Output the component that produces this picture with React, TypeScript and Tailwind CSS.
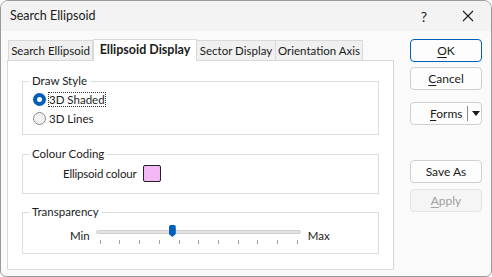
import React from "react";

const font = { fontFamily: 'Lato, "Noto Sans", sans-serif' };

function GroupBox({ label, className, children }: { label: string; className?: string; children?: React.ReactNode }) {
  return (
    <div className={"relative border border-[#dcdcdc] " + (className ?? "")}>
      <span className="absolute -top-[9px] left-[6px] bg-white px-[3px] text-[11.5px] leading-[16px] text-[#1b1b1b] whitespace-nowrap">
        {label}
      </span>
      {children}
    </div>
  );
}

function Radio({ checked, label, focused }: { checked?: boolean; label: string; focused?: boolean }) {
  return (
    <div className="flex items-center h-[19px]">
      {checked ? (
        <div className="w-[13px] h-[13px] rounded-full bg-[#005fb8] flex items-center justify-center">
          <div className="w-[5px] h-[5px] rounded-full bg-white" />
        </div>
      ) : (
        <div className="w-[13px] h-[13px] rounded-full border border-[#8a8a8a] bg-[#f3f3f3]" />
      )}
      <span
        className={
          "ml-[2px] px-[1px] text-[11.5px] leading-[15px] text-[#1b1b1b] whitespace-nowrap " +
          (focused ? "outline outline-1 outline-dotted outline-[#333] -outline-offset-1" : "")
        }
      >
        {label}
      </span>
    </div>
  );
}

function Btn({ children, primary, disabled, className }: { children: React.ReactNode; primary?: boolean; disabled?: boolean; className?: string }) {
  return (
    <div
      className={
        "h-[23px] w-[72px] rounded-[4px] flex items-center justify-center text-[12px] whitespace-nowrap " +
        (primary
          ? "border border-[#005fb8] bg-[#fdfdfd] text-[#1b1b1b] "
          : disabled
          ? "border border-[#e5e5e5] bg-[#f5f5f5] text-[#a0a0a0] "
          : "border border-[#d0d0d0] bg-[#fdfdfd] text-[#1b1b1b] ") +
        (className ?? "")
      }
    >
      {children}
    </div>
  );
}

export default function App() {
  const ticks = Array.from({ length: 11 }, (_, i) => i);
  return (
    <div style={font} className="w-[492px] h-[277px] overflow-hidden bg-white">
      <div className="w-[492px] h-[277px] border border-[#9a9a9a] rounded-t-[8px] rounded-b-[6px] bg-[#fafafa] flex flex-col overflow-hidden">
        {/* Title bar */}
        <div className="h-[30px] shrink-0 bg-[#f3f3f3] flex items-center">
          <span className="ml-[9px] text-[12.5px] text-[#1b1b1b] whitespace-nowrap">Search Ellipsoid</span>
          <span className="ml-auto mr-[35px] text-[14px] text-[#1b1b1b]">?</span>
          <svg width="12" height="12" viewBox="0 0 12 12" className="mr-[17px]">
            <path d="M1 1 L11 11 M11 1 L1 11" stroke="#1b1b1b" strokeWidth="1.1" />
          </svg>
        </div>
        {/* Body */}
        <div className="flex flex-1">
          <div className="ml-[6px] mt-[7px] w-[387px] flex flex-col">
            {/* Tabs */}
            <div className="flex items-end h-[22px] text-[11.5px] text-[#1b1b1b] pl-[1px] whitespace-nowrap">
              <div className="h-[20px] w-[85px] border border-b-0 border-[#d9d9d9] bg-[#f0f0f0] flex items-center justify-center">Search Ellipsoid</div>
              <div className="h-[22px] w-[104px] border border-b-0 border-[#d9d9d9] bg-white flex items-center justify-center font-bold text-[12.5px] -mb-[1px] relative z-10">Ellipsoid Display</div>
              <div className="h-[20px] w-[79px] border border-b-0 border-l-0 border-[#d9d9d9] bg-[#f0f0f0] flex items-center justify-center">Sector Display</div>
              <div className="h-[20px] w-[87px] border border-b-0 border-l-0 border-[#d9d9d9] bg-[#f0f0f0] flex items-center justify-center">Orientation Axis</div>
            </div>
            {/* Panel */}
            <div className="h-[210px] border border-[#d9d9d9] bg-white pt-[20px] pl-[14px] pr-[14px]">
              <GroupBox label="Draw Style" className="h-[54px] pt-[8px] pl-[10px]">
                <Radio checked label="3D Shaded" focused />
                <Radio label="3D Lines" />
              </GroupBox>
              <GroupBox label="Colour Coding" className="mt-[19px] h-[40px] pl-[40px] pt-[10px]">
                <div className="flex items-center">
                  <span className="text-[11.5px] text-[#1b1b1b] whitespace-nowrap tracking-[-0.2px]">Ellipsoid colour</span>
                  <div className="ml-[7px] w-[18px] h-[17px] rounded-[2px] border border-[#222] bg-[#f4b8f4]" />
                </div>
              </GroupBox>
              <GroupBox label="Transparency" className="mt-[18px] h-[42px] pl-[47px] pt-[12px]">
                <div className="flex items-start">
                  <span className="text-[11.5px] text-[#1b1b1b] mt-[2px]">Min</span>
                  <div className="ml-[6px] relative w-[205px] h-[20px]">
                    <div className="absolute left-0 right-0 top-[5px] h-[4px] rounded-[2px] bg-[#e3e3e3] border border-[#d0d0d0]" />
                    <div className="absolute left-[73px] top-0 w-[7px] h-[12px] bg-[#005fb8] rounded-t-[2px]" style={{ clipPath: "polygon(0 0,100% 0,100% 75%,50% 100%,0 75%)" }} />
                    {ticks.map((i) => (
                      <div key={i} className="absolute top-[15px] w-[1px] h-[4px] bg-[#a0a0a0]" style={{ left: 4 + i * 19.7 }} />
                    ))}
                  </div>
                  <span className="ml-[7px] text-[11.5px] text-[#1b1b1b] mt-[2px]">Max</span>
                </div>
              </GroupBox>
            </div>
          </div>
          {/* Buttons */}
          <div className="ml-[16px] mt-[8px] flex flex-col">
            <Btn primary><span className="underline decoration-1 underline-offset-2">O</span>K</Btn>
            <Btn className="mt-[5px]"><span className="underline underline-offset-2">C</span>ancel</Btn>
            <div className="mt-[12px] h-[23px] w-[72px] rounded-[4px] border border-[#d0d0d0] bg-[#fdfdfd] flex items-center text-[12px] text-[#1b1b1b]">
              <span className="ml-[19px]"><span className="underline underline-offset-2">F</span>orms</span>
              <div className="ml-[4px] w-[1px] h-[15px] bg-[#8a8a8a]" />
              <svg width="8" height="5" viewBox="0 0 8 5" className="ml-[4px]">
                <path d="M0 0 L8 0 L4 5 Z" fill="#1b1b1b" />
              </svg>
            </div>
            <Btn className="mt-[35px]">Save As</Btn>
            <Btn disabled className="mt-[6px]"><span className="underline underline-offset-2">A</span>pply</Btn>
          </div>
        </div>
      </div>
    </div>
  );
}
